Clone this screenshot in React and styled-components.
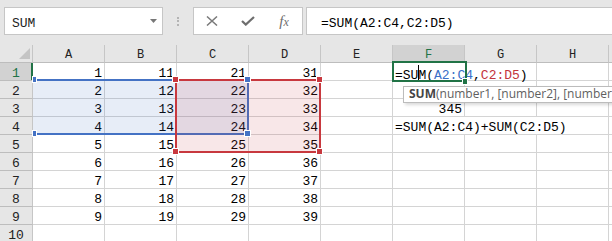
import styled, { createGlobalStyle } from 'styled-components';

const MONO = `"Liberation Mono", "DejaVu Sans Mono", monospace`;
const GREEN = '#217346';
const BLUE = '#4472c4';
const RED = '#c8383e';

const GlobalStyle = createGlobalStyle`
  html, body {
    margin: 0;
    padding: 0;
  }
  body {
    width: 612px;
    height: 241px;
    overflow: hidden;
    background: #e6e6e6;
  }
`;

const Window = styled.div`
  width: 612px;
  height: 241px;
  overflow: hidden;
  background: #e6e6e6;
`;

const FormulaBar = styled.div`
  display: flex;
  align-items: flex-start;
  height: 45px;
  padding: 7px 0 0 4px;
  box-sizing: border-box;
`;

const Field = styled.div`
  box-sizing: border-box;
  height: 28px;
  background: #fff;
  border: 1px solid #c6c6c6;
  font: 13px/25px ${MONO};
  color: #1e1e1e;
  white-space: nowrap;
`;

const NameBox = styled(Field)`
  width: 159px;
  display: flex;
  justify-content: space-between;
  padding: 3px 5px 0 7px;
`;

const DropArrow = styled.svg`
  margin-top: 8px;
`;

const Grip = styled.div`
  width: 30px;
  display: flex;
  flex-direction: column;
  align-items: center;
  gap: 1.4px;
  padding-top: 10px;

  span {
    width: 2px;
    height: 2px;
    background: #b4b4b4;
  }
`;

const ActionBox = styled(Field)`
  width: 110px;
  display: grid;
  grid-template-columns: repeat(3, 36px);
  align-items: center;
  justify-items: center;
  color: #767676;
`;

const FxLabel = styled.span`
  font-family: "Liberation Serif", serif;
  font-style: italic;
  font-size: 15px;
  line-height: 20px;
  color: #6e6e6e;
  padding-top: 1px;

  small {
    font-size: 12px;
  }
`;

const FormulaInput = styled(Field)`
  flex: 1;
  margin: 0 -4px 0 3px;
  padding: 3px 0 0 14px;
  color: #000;
`;

const Sheet = styled.div`
  position: relative;
  display: grid;
  grid-template-columns: 33px repeat(9, 72px);
  grid-auto-rows: 18px;
  background: #fff;
`;

const HeadCell = styled.div`
  box-sizing: border-box;
  background: ${p => (p.$active ? '#d2d2d2' : '#e6e6e6')};
  color: ${p => (p.$active ? GREEN : '#222')};
  border-right: 1px solid #c6c6c6;
  border-bottom: 1px solid #bdbdbd;
  font: 12px/17px ${MONO};
  padding-top: 2px;
  text-align: center;
`;

const Corner = styled(HeadCell)`
  display: flex;
  align-items: flex-end;
  justify-content: flex-end;
  padding: 0 2px 3px 0;
`;

const RowHead = styled(HeadCell)`
  font-size: 13px;
  border-right-color: ${p => (p.$active ? GREEN : '#c6c6c6')};
  box-shadow: ${p => (p.$active ? `inset -1px 0 0 ${GREEN}` : 'none')};
`;

const Cell = styled.div`
  box-sizing: border-box;
  grid-column: span ${p => p.$span || 1};
  border-right: 1px solid #d4d4d4;
  border-bottom: 1px solid #d4d4d4;
  padding: 2px 2px 0;
  font: 13px/17px ${MONO};
  color: #000;
  white-space: nowrap;
  text-align: ${p => p.$align || 'left'};
`;

const Ref = styled.span`
  color: ${p => p.$color};
`;

const Caret = styled.span`
  display: inline-block;
  width: 1px;
  height: 16px;
  margin-right: -1px;
  background: #000;
  vertical-align: -2px;
`;

const Range = styled.div`
  position: absolute;
  left: ${p => p.$left}px;
  top: ${p => p.$top}px;
  width: ${p => p.$width}px;
  height: ${p => p.$height}px;
  box-sizing: border-box;
  border: 2px solid ${p => p.$color};
  border-left-width: ${p => (p.$open ? 0 : 2)}px;
  background: ${p => p.$fill};
  pointer-events: none;
`;

const Handle = styled.div`
  position: absolute;
  left: ${p => p.$x}px;
  top: ${p => p.$y}px;
  width: ${p => p.$w || 5}px;
  height: 5px;
  background: ${p => p.$color};
  box-shadow: 0 0 0 1px #fff;
`;

const ActiveCell = styled.div`
  position: absolute;
  left: 392px;
  top: 16px;
  width: 75px;
  height: 21px;
  box-sizing: border-box;
  border: 2px solid ${GREEN};
  pointer-events: none;
`;

const Tooltip = styled.div`
  position: absolute;
  left: 403px;
  top: 41px;
  height: 17px;
  box-sizing: border-box;
  padding: 0 5px;
  background: #fff;
  border: 1px solid #bcbcbc;
  box-shadow: 2px 2px 3px rgba(0, 0, 0, 0.15);
  font: 12px/13px "Open Sans", "Noto Sans", sans-serif;
  color: #5f5f5f;
  white-space: nowrap;

  b {
    color: #454545;
  }
`;

const COLS = ['A', 'B', 'C', 'D', 'E', 'F', 'G', 'H', 'I'];

const ranges = [
  { color: BLUE, fill: 'rgba(68,114,196,0.13)', left: 33, top: 34, width: 216, height: 56, open: true },
  { color: RED, fill: 'rgba(200,56,62,0.12)', left: 175, top: 34, width: 146, height: 74 },
];

const handles = [
  { color: BLUE, x: 33, y: 32, w: 3 },
  { color: BLUE, x: 33, y: 86, w: 3 },
  { color: BLUE, x: 245, y: 32 },
  { color: BLUE, x: 245, y: 86 },
  { color: RED, x: 173, y: 32 },
  { color: RED, x: 317, y: 32 },
  { color: RED, x: 173, y: 104 },
  { color: RED, x: 317, y: 104 },
];

function rowCells(r) {
  const cells = [];
  if (r <= 9) {
    [r, 10 + r, 20 + r, 30 + r].forEach((v, i) =>
      cells.push({ key: COLS[i], text: v, align: 'right' })
    );
  } else {
    ['A', 'B', 'C', 'D'].forEach(c => cells.push({ key: c }));
  }
  cells.push({ key: 'E' });

  if (r === 1) {
    cells.push({
      key: 'F',
      span: 2,
      text: (
        <>
          =SU<Caret />M(<Ref $color="#3a6fc8">A2:C4</Ref>,<Ref $color="#c3343b">C2:D5</Ref>)
        </>
      ),
    });
    cells.push({ key: 'H' }, { key: 'I' });
  } else if (r === 4) {
    cells.push({ key: 'F', span: 3, text: '=SUM(A2:C4)+SUM(C2:D5)' }, { key: 'I' });
  } else {
    cells.push({ key: 'F', text: r === 3 ? 345 : '', align: 'right' });
    cells.push({ key: 'G' }, { key: 'H' }, { key: 'I' });
  }
  return cells;
}

export default function App() {
  const rows = Array.from({ length: 10 }, (_, i) => i + 1);

  return (
    <Window>
      <GlobalStyle />
      <FormulaBar>
        <NameBox>
          <span>SUM</span>
          <DropArrow width="7" height="4" viewBox="0 0 7 4">
            <path d="M0 0h7L3.5 4z" fill="#777" />
          </DropArrow>
        </NameBox>
        <Grip>
          <span />
          <span />
          <span />
        </Grip>
        <ActionBox>
          <svg width="12" height="10" viewBox="0 0 12 10">
            <path d="M1 0.5l10 9M11 0.5l-10 9" stroke="#7a7a7a" strokeWidth="1.5" fill="none" />
          </svg>
          <svg width="14" height="10" viewBox="0 0 14 10">
            <path d="M1 5l3.8 3.6L13 1" stroke="#6e6e6e" strokeWidth="2.2" fill="none" />
          </svg>
          <FxLabel>
            f<small>x</small>
          </FxLabel>
        </ActionBox>
        <FormulaInput>=SUM(A2:C4,C2:D5)</FormulaInput>
      </FormulaBar>

      <Sheet>
        <Corner>
          <svg width="11" height="11" viewBox="0 0 11 11">
            <path d="M11 0v11H0z" fill="#c4c4c4" />
          </svg>
        </Corner>
        {COLS.map(c => (
          <HeadCell key={c} $active={c === 'F'}>
            {c}
          </HeadCell>
        ))}

        {rows.map(r => [
          <RowHead key={`h${r}`} $active={r === 1}>
            {r}
          </RowHead>,
          ...rowCells(r).map(cell => (
            <Cell key={`${cell.key}${r}`} $span={cell.span} $align={cell.align}>
              {cell.text}
            </Cell>
          )),
        ])}

        {ranges.map((g, i) => (
          <Range
            key={i}
            $color={g.color}
            $fill={g.fill}
            $left={g.left}
            $top={g.top}
            $width={g.width}
            $height={g.height}
            $open={g.open}
          />
        ))}
        {handles.map((h, i) => (
          <Handle key={i} $color={h.color} $x={h.x} $y={h.y} $w={h.w} />
        ))}

        <ActiveCell />
        <Handle $color={GREEN} $x={463} $y={34} $w={4} />

        <Tooltip>
          <b>SUM</b>(number1, [number2], [number3], ...)
        </Tooltip>
      </Sheet>
    </Window>
  );
}
